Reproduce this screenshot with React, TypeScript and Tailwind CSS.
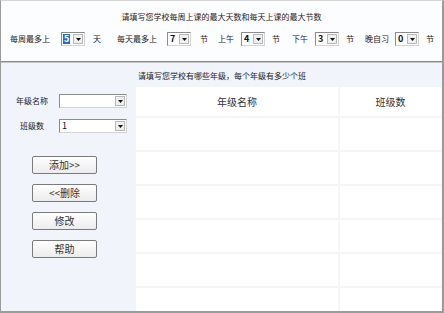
import React from "react";

const font = { fontFamily: '"Noto Sans CJK SC", "Noto Sans", sans-serif' };

function Combo({ value, w, selected, bold = true }: { value: string; w: string; selected?: boolean; bold?: boolean }) {
  return (
    <div className={`${w} h-[14px] flex items-stretch border border-[#8c8c8c] border-r-[#d4d4d4] border-b-[#d4d4d4] bg-white shrink-0`}>
      <div className="flex-1 flex items-center pl-[1px]">
        {value !== "" && (
          <span
            className={`leading-[10px] h-[10px] px-[1px] text-[9px] ${bold ? "font-bold" : "font-normal"} ${
              selected ? "bg-[#2f6bc8] text-white" : "text-[#111]"
            }`}
          >
            {value}
          </span>
        )}
      </div>
      <div className="w-[10px] my-[1px] mr-[1px] bg-[#f0f0f0] border border-[#b8b8b8] flex items-center justify-center">
        <svg width="5" height="3" viewBox="0 0 5 3">
          <path d="M0 0H5L2.5 3Z" fill="#111" />
        </svg>
      </div>
    </div>
  );
}

function Btn({ label }: { label: string }) {
  return (
    <div className="w-[65px] h-[18px] border border-[#7b7b7b] rounded-[2px] bg-gradient-to-b from-white to-[#ececec] flex items-center justify-center text-[10px] text-[#333] leading-none">
      {label}
    </div>
  );
}

export default function App() {
  const rows = [0, 1, 2, 3, 4, 5];
  return (
    <div
      style={font}
      className="w-[444px] h-[313px] flex flex-col border-t border-t-[#d6d6d6] border-l border-l-[#9a9a9a] border-r-2 border-r-[#9a9a9a] border-b-2 border-b-[#9a9a9a] text-[#222] overflow-hidden"
    >
      {/* top section */}
      <div className="h-[60px] bg-[#fcfdfe] flex flex-col">
        <div className="h-[31px] flex items-center justify-center text-[8px] leading-none pt-[1px]">
          请填写您学校每周上课的最大天数和每天上课的最大节数
        </div>
        <div className="flex items-center pl-[9px] text-[8px] leading-none">
          <span>每周最多上</span>
          <span className="ml-[11px]"><Combo value="5" w="w-[24px]" selected /></span>
          <span className="ml-[8px]">天</span>
          <span className="ml-[16px]">每天最多上</span>
          <span className="ml-[10px]"><Combo value="7" w="w-[24px]" /></span>
          <span className="ml-[9px]">节</span>
          <span className="ml-[10px]">上午</span>
          <span className="ml-[7px]"><Combo value="4" w="w-[24px]" /></span>
          <span className="ml-[7px]">节</span>
          <span className="ml-[12px]">下午</span>
          <span className="ml-[7px]"><Combo value="3" w="w-[24px]" /></span>
          <span className="ml-[7px]">节</span>
          <span className="ml-[11px]">晚自习</span>
          <span className="ml-[6px]"><Combo value="0" w="w-[24px]" /></span>
          <span className="ml-[7px]">节</span>
        </div>
      </div>
      <div className="h-[2px] bg-[#8a8a8a] border-b border-b-[#c8c8c8]" />

      {/* bottom section */}
      <div className="flex-1 bg-[#f1f5fb] flex min-h-0">
        {/* left */}
        <div className="w-[135px] flex flex-col pt-[31px]">
          <div className="flex items-center">
            <span className="w-[50px] ml-[6px] text-center text-[8px] leading-none">年级名称</span>
            <span className="ml-[2px]"><Combo value="" w="w-[68px]" /></span>
          </div>
          <div className="flex items-center mt-[11px]">
            <span className="w-[50px] ml-[6px] text-center text-[8px] leading-none">班级数</span>
            <span className="ml-[2px]"><Combo value="1" w="w-[68px]" bold={false} /></span>
          </div>
          <div className="flex flex-col gap-[10px] ml-[31px] mt-[23px]">
            <Btn label="添加>>" />
            <Btn label="<<删除" />
            <Btn label="修改" />
            <Btn label="帮助" />
          </div>
        </div>
        {/* right */}
        <div className="flex-1 flex flex-col min-w-0 pr-[1px]">
          <div className="h-[24px] flex items-center pl-[2px] text-[8px] leading-none pt-[2px]">
            请填写您学校有哪些年级，每个年级有多少个班
          </div>
          <div className="flex-1 bg-[#f5f5f5] flex flex-col gap-[2px] overflow-hidden">
            <div className="h-[29px] shrink-0 flex gap-[2px]">
              <div className="w-[202px] bg-white flex items-center justify-center text-[10px] text-[#333]">年级名称</div>
              <div className="flex-1 bg-white flex items-center justify-center text-[10px] text-[#333]">班级数</div>
            </div>
            {rows.map((r) => (
              <div key={r} className="h-[32px] shrink-0 flex gap-[2px]">
                <div className="w-[202px] bg-white" />
                <div className="flex-1 bg-white" />
              </div>
            ))}
          </div>
        </div>
      </div>
    </div>
  );
}
